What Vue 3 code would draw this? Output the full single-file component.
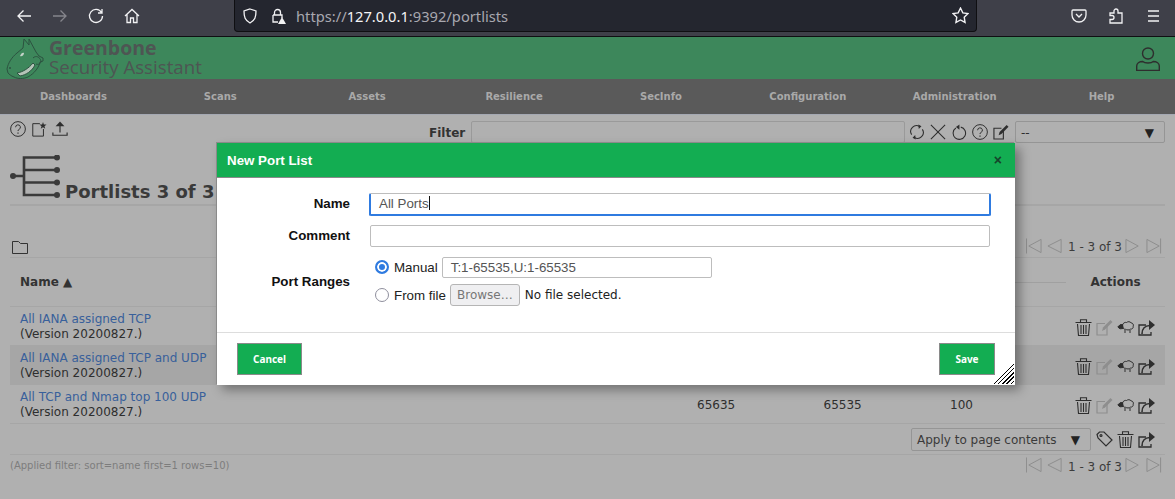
<template>
	<div class="page">
		<svg class="defs" width="0" height="0">
			<defs>
				<g id="trash" fill="none" stroke="currentColor" stroke-width="1.100">
					<path d="M.5 3.500h16M5.500 3.500V.8h6v2.700" />
					<path d="M2.500 5l1 11.500h10l1-11.500M6 6v9M8.500 6v9M11 6v9" />
				</g>
				<g id="edit" fill="none" stroke="currentColor" stroke-width="1.200">
					<path d="M11 5.500v10.500H1V4.500h8" />
					<path d="M6 12l1-3.500L14.500 1l2 2L9 10.500z" fill="currentColor" stroke="none" />
				</g>
				<g id="sheep" fill="none" stroke="currentColor" stroke-width="1">
					<path d="M5.500 6c.5-2 2.500-3 4-2.500 1.500-1.200 3.500-1 4.500.3 2 .2 2.800 2 2.200 3.500.3 1.700-1 3-2.700 2.800-1.300 1.100-3.500 1.100-5 .2C6.500 10.500 5.500 9 5.500 6z" />
					<path d="M5.500 5.500L3 5.800.8 8l2.200 1.800 3-.3z" fill="currentColor" />
					<path d="M8 11v3M13 11v3" />
				</g>
				<g id="export" fill="none" stroke="currentColor" stroke-width="1.300">
					<path d="M8 6H1v10h12v-3" />
					<path d="M4 15c0-5 3-8.500 8-8.500" stroke-width="1.600" />
					<path d="M11 1l6 5-6 5z" fill="currentColor" stroke="none" />
				</g>
				<g id="page-first" fill="none" stroke="currentColor" stroke-width="1">
					<path d="M.5 0v16M16 1L3 8l13 7z" />
				</g>
				<g id="page-prev" fill="none" stroke="currentColor" stroke-width="1">
					<path d="M15 1L1 8l14 7z" />
				</g>
				<g id="page-next" fill="none" stroke="currentColor" stroke-width="1">
					<path d="M1 1l13 7-13 7z" />
				</g>
				<g id="page-last" fill="none" stroke="currentColor" stroke-width="1">
					<path d="M15.500 0v16M1 1l13 7-13 7z" />
				</g>
			</defs>
		</svg>

		<div class="browser">
			<div class="browser-left">
				<svg class="bicon" viewBox="0 0 16 16"><path d="M15 8H2M7.500 2.500L2 8l5.500 5.500" /></svg>
				<svg class="bicon off" viewBox="0 0 16 16"><path d="M1 8h13M8.500 2.500L14 8l-5.500 5.500" /></svg>
				<svg class="bicon" viewBox="0 0 16 16"><path d="M13.500 4.500A6.500 6.500 0 1 0 14.500 8M14 1v4h-4" /></svg>
				<svg class="bicon" viewBox="0 0 16 16"><path d="M1 8l7-6.500L15 8M3 6.500V14.500h3.500V10h3v4.500H13V6.500" /></svg>
			</div>
			<div class="urlbar">
				<svg class="bicon small" viewBox="0 0 16 16"><path d="M8 1l6 2c0 6-1 9.500-6 12C3 12.500 2 9 2 3z" /></svg>
				<svg class="bicon small lock" viewBox="0 0 16 16"><path d="M4.500 7V4.500a3 3 0 0 1 6 0V7M3 7h9v3M3 7v7h5" /><path class="warn" d="M12 9l4 7H8z" /></svg>
				<span class="url">https://<b>127.0.0.1</b>:9392/portlists</span>
				<svg class="bicon star" viewBox="0 0 16 16"><path d="M8 1l2.200 4.500 4.800.7-3.500 3.400.8 4.900L8 12.200l-4.300 2.300.8-4.900L1 6.200l4.800-.7z" /></svg>
			</div>
			<div class="browser-right">
				<svg class="bicon" viewBox="0 0 16 16"><path d="M2 2h12a1 1 0 0 1 1 1v4a7 7 0 0 1-14 0V3a1 1 0 0 1 1-1zM5 6l3 3 3-3" /></svg>
				<svg class="bicon" viewBox="0 0 16 16"><path d="M2 15V11.500h2a1.500 1.500 0 0 0 0-4H2V5h4V3a2 2 0 0 1 4 0v2h4v10z" /></svg>
				<svg class="bicon" viewBox="0 0 16 16"><path d="M3 3h11M3 8h11M3 13h11" /></svg>
			</div>
		</div>

		<header class="brand">
			<svg class="logo" viewBox="0 0 44 42" fill="none">
				<path d="M1 32C2 26 6 20 11 16L17 11 18 2l5 6 0-6 7 13 3 4 4 2v3l-3 1c-1 5-5 11-12 15-5 2-10 2-14 0-3-1-5-3-6-4z" stroke="#2c5240" stroke-width="1" />
				<path d="M14 19c1-3 3-4 4-3 0 2-2 4-4 3z" fill="#c4d2c8" />
				<path d="M11 36c6-1 12-5 16-10l2 2c-3 6-9 10-15 11z" fill="#b4c4b8" stroke="#2c5240" />
				<path d="M27 21c3-3 7-1 8 3 0 3-3 4-5 3" stroke="#2c5240" />
				<circle cx="4" cy="31" r="1" fill="#2c5240" />
			</svg>
			<div class="brand-text">
				<div class="brand-name">Greenbone</div>
				<div class="brand-sub">Security Assistant</div>
			</div>
			<svg class="user" viewBox="0 0 24 24" fill="none" stroke="#2e2e2e" stroke-width="1.400">
				<circle cx="12" cy="6.500" r="5.500" />
				<path d="M.7 23.500V19c0-2.500 2.500-4.500 6-4.500 2 2 8.600 2 10.600 0 3.500 0 6 2 6 4.500v4.500z" />
			</svg>
		</header>

		<nav class="menu">
			<div v-for="item in menu" :key="item" class="menu-item">{{ item }}</div>
		</nav>

		<main class="content">
			<div class="toolbar">
				<div class="tool-left">
					<svg class="tool" viewBox="0 0 18 18" fill="none" stroke="currentColor" stroke-width="1.100"><circle cx="9" cy="9" r="8.300" /><path d="M6.300 7a2.700 2.700 0 1 1 3.800 2.500c-.8.4-1.100.8-1.100 1.800M9 12.800v1.700" /></svg>
					<svg class="tool" viewBox="0 0 18 18" fill="none" stroke="currentColor" stroke-width="1.100"><path d="M10 3H2v14h12v-8" /><path d="M13.500 1l1 2.800 3 .2-2.300 1.800.8 2.800-2.500-1.600L11 8.600l.8-2.800L9.500 4l3-.2z" fill="currentColor" stroke="none" /></svg>
					<svg class="tool" viewBox="0 0 18 18" fill="none" stroke="currentColor" stroke-width="1.300"><path d="M1 13v3h16v-3M9 13V3" /><path d="M9 .5L14 6H4z" fill="currentColor" stroke="none" /></svg>
				</div>
				<label class="filter-label">Filter</label>
				<div class="filter-input"></div>
				<div class="filter-tools">
					<svg class="tool" viewBox="0 0 18 18" fill="none" stroke="currentColor" stroke-width="1.200"><path d="M3 12a6.500 6.500 0 0 1 9-9M15 6a6.500 6.500 0 0 1-9 9" /><path d="M10.500 .5l3.500 2-3 3zM7.500 17.500L4 15.500l3-3z" fill="currentColor" stroke="none" /></svg>
					<svg class="tool" viewBox="0 0 18 18" fill="none" stroke="currentColor" stroke-width="1.200"><path d="M1 1l16 16M17 1L1 17" /></svg>
					<svg class="tool" viewBox="0 0 18 18" fill="none" stroke="currentColor" stroke-width="1.200"><path d="M5.500 4.500a7 7 0 1 0 5.500-1" /><path d="M9.500 .5v6L5.500 3.500z" fill="currentColor" stroke="none" /></svg>
					<svg class="tool" viewBox="0 0 18 18" fill="none" stroke="currentColor" stroke-width="1.100"><circle cx="9" cy="9" r="8.300" /><path d="M6.300 7a2.700 2.700 0 1 1 3.800 2.500c-.8.4-1.100.8-1.100 1.800M9 12.800v1.700" /></svg>
					<svg class="tool" viewBox="0 0 17 17"><use href="#edit" /></svg>
				</div>
				<div class="filter-select">
					<span>--</span>
					<span class="arrow">▼</span>
				</div>
			</div>

			<div class="title-row">
				<svg class="title-icon" viewBox="0 0 50 43" fill="none" stroke="#3a3a3a" stroke-width="2.600">
					<path d="M3 21h11M47 2.500H14V40h33M14 15h33M14 27.500h33" />
					<g fill="#3a3a3a" stroke="none">
						<circle cx="3" cy="21" r="3" />
						<circle cx="47" cy="2.500" r="3" />
						<circle cx="47" cy="15" r="3" />
						<circle cx="47" cy="27.500" r="3" />
						<circle cx="47" cy="40" r="3" />
					</g>
				</svg>
				<h1 class="title">Portlists 3 of 3</h1>
			</div>

			<div class="list-tools">
				<svg class="folder" viewBox="0 0 16 13" fill="none" stroke="#333" stroke-width="1"><path d="M.5 12.500V.5h6l2 2h7v10z" /></svg>
				<div class="pager">
					<svg class="pg" viewBox="0 0 17 16"><use href="#page-first" /></svg>
					<svg class="pg" viewBox="0 0 17 16"><use href="#page-prev" /></svg>
					<span>1 - 3 of 3</span>
					<svg class="pg" viewBox="0 0 17 16"><use href="#page-next" /></svg>
					<svg class="pg" viewBox="0 0 17 16"><use href="#page-last" /></svg>
				</div>
			</div>

			<div class="table-head">
				<div class="th-name">Name ▲</div>
				<div class="th-rule"></div>
				<div class="th-actions">Actions</div>
			</div>

			<div v-for="(row, i) in rows" :key="row.name" :class="['row', { alt: i === 1 }]">
				<div class="cell-name">
					<a class="link">{{ row.name }}</a>
					<div>(Version 20200827.)</div>
				</div>
				<div class="num">{{ row.total }}</div>
				<div class="num">{{ row.tcp }}</div>
				<div class="num">{{ row.udp }}</div>
				<div class="actions">
					<svg class="act" viewBox="0 0 17 17"><use href="#trash" /></svg>
					<svg class="act muted" viewBox="0 0 17 17"><use href="#edit" /></svg>
					<svg class="act" viewBox="0 0 17 17"><use href="#sheep" /></svg>
					<svg class="act" viewBox="0 0 17 17"><use href="#export" /></svg>
				</div>
			</div>

			<div class="bulk">
				<div class="bulk-select">
					<span>Apply to page contents</span>
					<span class="arrow">▼</span>
				</div>
				<svg class="act" viewBox="0 0 17 17" fill="none" stroke="#2e2e2e" stroke-width="1.200"><path d="M1 3.500L3.500 1H8l8 8-6 6-8-8z" /><circle cx="5" cy="4.500" r="1" /></svg>
				<svg class="act" viewBox="0 0 17 17"><use href="#trash" /></svg>
				<svg class="act" viewBox="0 0 17 17"><use href="#export" /></svg>
			</div>

			<div class="foot">
				<span class="applied">(Applied filter: sort=name first=1 rows=10)</span>
				<div class="pager">
					<svg class="pg" viewBox="0 0 17 16"><use href="#page-first" /></svg>
					<svg class="pg" viewBox="0 0 17 16"><use href="#page-prev" /></svg>
					<span>1 - 3 of 3</span>
					<svg class="pg" viewBox="0 0 17 16"><use href="#page-next" /></svg>
					<svg class="pg" viewBox="0 0 17 16"><use href="#page-last" /></svg>
				</div>
			</div>
		</main>

		<section class="dialog">
			<div class="dialog-title">
				<span>New Port List</span>
				<span class="close">×</span>
			</div>
			<div class="dialog-body">
				<div class="field first">
					<label>Name</label>
					<div class="input focused">All Ports<i class="caret"></i></div>
				</div>
				<div class="field second">
					<label>Comment</label>
					<div class="input"></div>
				</div>
				<div class="field ranges">
					<label>Port Ranges</label>
					<div class="range-opts">
						<div class="opt">
							<span class="radio on"></span>
							<span>Manual</span>
							<div class="input manual">T:1-65535,U:1-65535</div>
						</div>
						<div class="opt file">
							<span class="radio"></span>
							<span>From file</span>
							<span class="browse">Browse…</span>
							<span class="nofile">No file selected.</span>
						</div>
					</div>
				</div>
			</div>
			<div class="dialog-foot">
				<button class="btn cancel">Cancel</button>
				<button class="btn save">Save</button>
			</div>
			<div class="resize"></div>
		</section>
	</div>
</template>

<script setup>
const menu = ['Dashboards', 'Scans', 'Assets', 'Resilience', 'SecInfo', 'Configuration', 'Administration', 'Help'];

const rows = [
	{ name: 'All IANA assigned TCP', total: '', tcp: '', udp: '' },
	{ name: 'All IANA assigned TCP and UDP', total: '', tcp: '', udp: '' },
	{ name: 'All TCP and Nmap top 100 UDP', total: '65635', tcp: '65535', udp: '100' }
];
</script>

<style>
html,
body {
	margin: 0;
	background: #b0b0b0;
}
</style>

<style scoped>
.page {
	position: relative;
	width: 1175px;
	height: 499px;
	overflow: hidden;
	background: #b0b0b0;
	color: #2e2e2e;
	font-family: "DejaVu Sans", sans-serif;
	font-size: 12px;
}

.defs {
	position: absolute;
}

/* browser chrome */
.browser {
	position: relative;
	display: flex;
	height: 36px;
	background: #3f4049;
	border-bottom: 1px solid #0f0f12;
}

.browser-left {
	display: flex;
	align-items: center;
	gap: 20px;
	width: 234px;
	height: 32px;
	padding-left: 16px;
	box-sizing: border-box;
}

.bicon {
	width: 16px;
	height: 16px;
	fill: none;
	stroke: #f2f2f4;
	stroke-width: 1.300;
	flex: none;
}

.bicon.off {
	stroke: #85858c;
}

.bicon.small {
	width: 16px;
	height: 16px;
}

.warn {
	fill: #f2f2f4;
	stroke: none;
}

.urlbar {
	display: flex;
	align-items: center;
	width: 743px;
	height: 32px;
	box-sizing: border-box;
	padding: 0 7px 0 7px;
	background: #24262f;
	border: 1px solid #0f0f12;
	border-top: 0;
	border-radius: 0 0 4px 4px;
}

.lock {
	margin-left: 12px;
}

.url {
	margin-left: 10px;
	flex: 1;
	font-family: "Noto Sans", sans-serif;
	font-size: 14.700px;
	color: #a8a8af;
}

.url b {
	font-weight: 400;
	color: #f4f4f6;
}

.star {
	width: 17px;
	height: 17px;
}

.browser-right {
	display: flex;
	align-items: center;
	gap: 21px;
	height: 32px;
	padding-left: 94px;
}

/* green header */
.brand {
	display: flex;
	align-items: center;
	height: 42px;
	background: #3d875b;
	position: relative;
}

.logo {
	width: 44px;
	height: 42px;
	margin-left: 6px;
}

.brand-text {
	color: #4e5553;
	margin-left: -1px;
	font-family: "Open Sans", sans-serif;
}

.brand-name {
	font-size: 19.500px;
	font-weight: 700;
	line-height: 19px;
}

.brand-sub {
	font-size: 18.700px;
	line-height: 19px;
	margin-bottom: 2px;
}

.user {
	width: 24px;
	height: 24px;
	margin-left: auto;
	margin-right: 15px;
	margin-top: 1px;
}

/* main menu */
.menu {
	display: grid;
	grid-template-columns: repeat(8, 1fr);
	height: 35px;
	background: #5a5a5a;
	border-bottom: 1px solid #a5a9b3;
}

.menu-item {
	text-align: center;
	line-height: 35px;
	font-size: 10px;
	font-weight: 700;
	color: #a9a9a9;
}

.content {
	padding: 0 10px;
}

.toolbar {
	display: flex;
	align-items: flex-start;
	height: 28px;
	padding-top: 6px;
	box-sizing: border-box;
}

.tool-left {
	display: flex;
	gap: 5px;
	width: 419px;
	height: 18px;
}

.tool {
	width: 16px;
	height: 16px;
	flex: none;
}

.filter-label {
	width: 42px;
	font-weight: 700;
	line-height: 25px;
	color: #333;
}

.filter-input {
	width: 432px;
	height: 20px;
	border: 1px solid #9a9a9a;
	border-radius: 2px;
}

.filter-tools {
	display: flex;
	gap: 5px;
	width: 110px;
	box-sizing: border-box;
	padding: 3px 0 0 4px;
}

.filter-select,
.bulk-select {
	display: flex;
	align-items: center;
	justify-content: space-between;
	box-sizing: border-box;
	border: 1px solid #959595;
	border-radius: 2px;
	padding: 1px 10px 0 5px;
}

.filter-select {
	width: 150px;
	height: 22px;
	padding-top: 2px;
}

.arrow {
	font-size: 12px;
	color: #222;
}

.title-row {
	display: flex;
	align-items: flex-end;
	height: 63px;
	box-sizing: border-box;
	padding-bottom: 6px;
	border-bottom: 2px solid #a6a6a6;
}

.title-icon {
	width: 50px;
	height: 43px;
}

.title {
	margin: 0 0 -5px 5px;
	font-size: 18px;
	line-height: 22px;
	font-weight: 700;
	color: #3a3a3a;
}

.list-tools {
	display: flex;
	align-items: flex-end;
	justify-content: space-between;
	height: 52px;
	box-sizing: border-box;
	padding: 0 0 3px 2px;
	border-bottom: 1px solid #a6a6a6;
}

.folder {
	width: 16px;
	height: 13px;
}

.pager {
	display: flex;
	align-items: center;
	gap: 5px;
	padding-right: 3px;
	color: #3c3c3c;
}

.pager span {
	margin: 3px -2px 0 0;
}

.pg {
	width: 16px;
	height: 16px;
	color: #8c8c8c;
}

.table-head {
	display: flex;
	align-items: center;
	height: 49px;
	box-sizing: border-box;
	border-bottom: 1px solid #a6a6a6;
	font-weight: 700;
	color: #333;
}

.th-name {
	padding-left: 10px;
}

.th-rule {
	margin-left: auto;
	width: 151px;
	height: 1px;
	background: #a0a0a0;
}

.th-actions {
	width: 99px;
	text-align: center;
}

.row {
	display: grid;
	grid-template-columns: 677px 126.500px 126.500px 126px 99px;
	align-items: center;
	height: 39px;
	box-sizing: border-box;
	padding-top: 2px;
	border-bottom: 1px solid #a6a6a6;
}

.row.alt {
	background: #a6a6a6;
}

.cell-name {
	padding-left: 10px;
	line-height: 15px;
}

.link {
	color: #38609b;
}

.num {
	padding-left: 10px;
}

.actions {
	display: flex;
	gap: 4px;
	justify-content: flex-end;
	padding-right: 10px;
}

.act {
	width: 17px;
	height: 17px;
	color: #2e2e2e;
	flex: none;
}

.act.muted {
	color: #8e8e8e;
}

.bulk {
	display: flex;
	align-items: center;
	justify-content: flex-end;
	gap: 4px;
	height: 31px;
	box-sizing: border-box;
	padding-right: 10px;
	border-bottom: 1px solid #a6a6a6;
}

.bulk-select {
	width: 180px;
	height: 23px;
	margin-right: 1px;
	color: #3a3a3a;
}

.foot {
	display: flex;
	align-items: center;
	justify-content: space-between;
	height: 20px;
}

.applied {
	font-size: 10px;
	color: #7d7d7d;
}

/* dialog */
.dialog {
	position: absolute;
	left: 217px;
	top: 143px;
	width: 798px;
	height: 242px;
	background: #fff;
	color: #111;
	box-shadow: -1px -1px 0 #8a8a8a, 5px 5px 10px rgba(0, 0, 0, 0.35);
	font-family: "Liberation Sans", sans-serif;
	font-size: 13.333px;
	display: flex;
	flex-direction: column;
}

.dialog-title {
	display: flex;
	align-items: center;
	justify-content: space-between;
	height: 35px;
	box-sizing: border-box;
	padding: 0 13px 0 10px;
	background: #13ad52;
	border-bottom: 1px solid #8a8a8a;
	color: #fff;
	font-weight: 700;
}

.close {
	color: #15432a;
	font-size: 14px;
	font-weight: 700;
}

.dialog-body {
	flex: 1;
	padding-top: 15px;
}

.field {
	display: flex;
	align-items: center;
}

.field label {
	width: 133px;
	margin-right: 20px;
	padding-bottom: 2px;
	text-align: right;
	font-weight: 700;
}

.field.second {
	margin-top: 9px;
}

.field.ranges {
	margin-top: 9px;
}

.field.ranges label {
	padding-bottom: 0;
}

.input {
	box-sizing: border-box;
	width: 620px;
	height: 22px;
	padding: 0 8px;
	border: 1px solid #bdbdbd;
	border-radius: 2px;
	line-height: 20px;
	color: #555;
}

.input.focused {
	border-color: #bdbdbd #2f7be0 #2f7be0 #2f7be0;
	border-width: 1px 2px 2px 2px;
	width: 622px;
	height: 23px;
	margin-left: -1px;
}

.caret {
	display: inline-block;
	width: 1px;
	height: 14px;
	background: #111;
	vertical-align: -2px;
}

.range-opts {
	display: flex;
	flex-direction: column;
	gap: 6px;
	padding-left: 5px;
}

.opt {
	display: flex;
	align-items: center;
	height: 22px;
	color: #222;
}

.radio {
	box-sizing: border-box;
	width: 14px;
	height: 14px;
	margin-right: 5px;
	border: 1.500px solid #8f8f9d;
	border-radius: 50%;
	background: #fff;
}

.radio.on {
	border: 2px solid #2f7be0;
	box-shadow: inset 0 0 0 2px #fff;
	background: #2f7be0;
}

.input.manual {
	width: 270px;
	height: 21px;
	margin-left: 4px;
}

.browse {
	box-sizing: border-box;
	width: 70px;
	height: 22px;
	margin-left: 4px;
	border: 1px solid #b5b5b5;
	border-radius: 3px;
	background: #efeff1;
	color: #777;
	font-family: "DejaVu Sans", sans-serif;
	font-size: 12px;
	line-height: 20px;
	text-align: center;
}

.nofile {
	margin-left: 5px;
	font-family: "DejaVu Sans", sans-serif;
	font-size: 12px;
}

.dialog-foot {
	display: flex;
	justify-content: space-between;
	height: 53px;
	box-sizing: border-box;
	padding: 10px 20px 0;
	border-top: 1px solid #ddd;
}

.btn {
	height: 32px;
	border: 1px solid #8a8a8a;
	background: #13ad52;
	color: #fff;
	font-family: "Noto Sans", sans-serif;
	font-size: 10px;
	font-weight: 700;
	padding: 0;
}

.cancel {
	width: 65px;
}

.save {
	width: 56px;
}

.resize {
	position: absolute;
	right: 1px;
	bottom: 1px;
	width: 21px;
	height: 21px;
	background: repeating-linear-gradient(135deg, #000 0 1px, #fff 1px 3px);
	clip-path: polygon(100% 0, 100% 100%, 0 100%);
}
</style>
